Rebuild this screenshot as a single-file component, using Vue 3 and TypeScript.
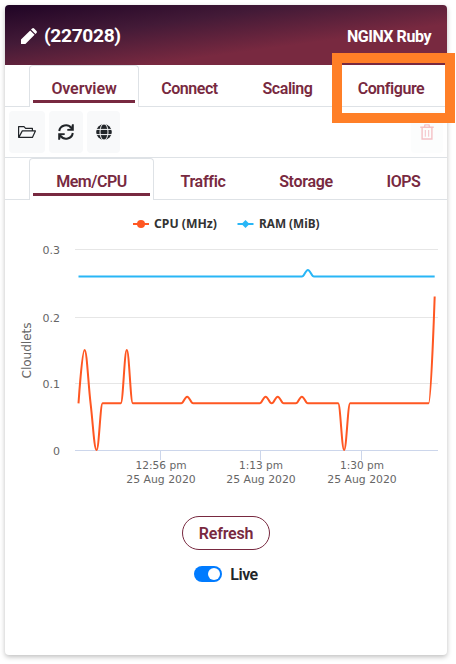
<script setup lang="ts">
import { ref } from 'vue'

type Point = { x: number; y: number }

const mainTabs = ['Overview', 'Connect', 'Scaling', 'Configure']
const statTabs = ['Mem/CPU', 'Traffic', 'Storage', 'IOPS']
const mainTab = ref('Overview')
const statTab = ref('Mem/CPU')
const live = ref(true)

const COUNT = 60
const cpuValues: Record<number, number> = { 1: 0.15, 3: 0, 8: 0.15, 18: 0.08, 31: 0.08, 33: 0.08, 37: 0.08, 44: 0, 59: 0.23 }
const cpu = Array.from({ length: COUNT }, (_, i) => cpuValues[i] ?? 0.07)
const ram = Array.from({ length: COUNT }, (_, i) => (i === 38 ? 0.27 : 0.26))

const gridLines = [
  { label: '0.3', y: 49.5 },
  { label: '0.2', y: 117.5 },
  { label: '0.1', y: 183.5 },
  { label: '0', y: 250.5 },
]
const ticks = [
  { time: '12:56 pm', x: 155.5, w: 51 },
  { time: '1:13 pm', x: 255.5, w: 44 },
  { time: '1:30 pm', x: 356.5, w: 44 },
]

const toPoints = (values: number[]): Point[] =>
  values.map((v, i) => ({ x: 73.5 + i * 6.037, y: 250 - v * 667 }))

// Smooth spline whose control points never overshoot the neighbouring values.
function spline(values: number[]): string {
  const pts = toPoints(values)
  let d = `M${pts[0].x} ${pts[0].y}`
  let out: Point = pts[0]
  for (let i = 1; i < pts.length; i++) {
    const prev = pts[i - 1]
    const p = pts[i]
    const next = pts[i + 1]
    let left: Point = p
    let right: Point = p
    if (next) {
      left = { x: (1.5 * p.x + prev.x) / 2.5, y: (1.5 * p.y + prev.y) / 2.5 }
      right = { x: (1.5 * p.x + next.x) / 2.5, y: (1.5 * p.y + next.y) / 2.5 }
      const fix = ((right.y - left.y) * (right.x - p.x)) / (right.x - left.x) + p.y - right.y
      left.y += fix
      right.y += fix
      if (left.y > prev.y && left.y > p.y) {
        left.y = Math.max(prev.y, p.y)
        right.y = 2 * p.y - left.y
      } else if (left.y < prev.y && left.y < p.y) {
        left.y = Math.min(prev.y, p.y)
        right.y = 2 * p.y - left.y
      }
      if (right.y > next.y && right.y > p.y) {
        right.y = Math.max(next.y, p.y)
        left.y = 2 * p.y - right.y
      } else if (right.y < next.y && right.y < p.y) {
        right.y = Math.min(next.y, p.y)
        left.y = 2 * p.y - right.y
      }
    }
    d += `C${out.x} ${out.y} ${left.x} ${left.y} ${p.x} ${p.y}`
    out = right
  }
  return d
}
const cpuPath = spline(cpu)
const ramPath = spline(ram)
</script>

<template>
  <main class="page">
    <section class="card">
      <header class="head">
        <svg class="pencil" viewBox="0 0 16 16" width="16" height="16">
          <path d="M0 16V11.6L9.2 2.4 13.6 6.8 4.4 16ZM10 1.6 11.1.5Q12.1-.3 13.1.5L15.5 2.9Q16.3 3.9 15.5 4.9L14.4 6Z" />
        </svg>
        <h1 class="ident">(227028)</h1>
        <span class="stack">NGINX Ruby</span>
      </header>

      <nav class="tabs tabs-main">
        <button v-for="t in mainTabs" :key="t" class="tab" :class="[t.toLowerCase(), { active: mainTab === t }]" @click="mainTab = t">
          <span>{{ t }}</span>
        </button>
      </nav>

      <div class="tools">
        <button class="tool folder" aria-label="Files">
          <svg viewBox="0 0 20 14" width="20" height="14" fill="none" stroke="#212529" stroke-width="1.2" stroke-linejoin="round">
            <path d="M1.6 12.4V1.6H7L8.6 3.3H15.4V5.8M1.8 12.4 5.3 5.9H18.4L15.4 12.4Z" />
          </svg>
        </button>
        <button class="tool sync" aria-label="Restart">
          <svg viewBox="0 0 16 16" width="16" height="16" fill="none" stroke="#212529" stroke-width="2">
            <path d="M1.2 7A6.8 6.8 0 0 1 13.4 4.1M14.8 9A6.8 6.8 0 0 1 2.6 11.9" />
            <path d="M15.8.2V6.7H9.3V5L12.8 4.8 14 .2ZM.2 15.8V9.3H6.7V11L3.2 11.2 2 15.8Z" fill="#212529" stroke="none" />
          </svg>
        </button>
        <button class="tool globe" aria-label="Open in browser">
          <svg viewBox="0 0 16 16" width="16" height="16">
            <circle cx="8" cy="8" r="7.8" fill="#212529" />
            <g fill="none" stroke="#f8f9fa" stroke-width="1">
              <ellipse cx="8" cy="8" rx="4" ry="8.2" />
              <path d="M0 5.4H16M0 10.6H16" />
            </g>
          </svg>
        </button>
        <button class="tool trash" aria-label="Delete">
          <svg viewBox="0 0 14 16" width="14" height="16" fill="none" stroke="#dc3545" stroke-width="1.4">
            <path d="M.3 3.3H13.7M4.4 3.1 5 .9H9L9.6 3.1M2.1 3.5V15H11.9V3.5" />
            <path d="M5.3 6V12.7M8.7 6V12.7" stroke-width="1" />
          </svg>
        </button>
      </div>

      <nav class="tabs tabs-stats">
        <button v-for="t in statTabs" :key="t" class="tab" :class="[t.toLowerCase().replace('/', '-'), { active: statTab === t }]" @click="statTab = t">
          <span>{{ t }}</span>
        </button>
      </nav>

      <svg class="chart" viewBox="0 0 442 300" width="442" height="300">
        <g class="legend">
          <path d="M128 24H144" stroke="#ff5722" stroke-width="2" />
          <circle cx="136" cy="24" r="4" fill="#ff5722" />
          <text x="149" y="28" textLength="63" lengthAdjust="spacingAndGlyphs">CPU (MHz)</text>
          <path d="M232.500 24H248.500" stroke="#29b6f6" stroke-width="2" />
          <path d="M240.500 20L244.500 24 240.500 28 236.500 24Z" fill="#29b6f6" />
          <text x="254" y="28" textLength="60.500" lengthAdjust="spacingAndGlyphs">RAM (MiB)</text>
        </g>
        <g v-for="g in gridLines" :key="g.label">
          <path :d="`M70 ${g.y}H433`" :stroke="g.label === '0' ? '#ccd6eb' : '#e6e6e6'" />
          <text class="axis" :x="g.label === '0' ? 48 : 37.500" :y="g.y + 4">{{ g.label }}</text>
        </g>
        <text class="title" transform="translate(26 178.500) rotate(-90)" textLength="56" lengthAdjust="spacingAndGlyphs">Cloudlets</text>
        <g v-for="t in ticks" :key="t.time">
          <path :d="`M${t.x} 251V260`" stroke="#ccd6eb" />
          <text class="axis mid" :x="t.x + 0.500" y="269" :textLength="t.w" lengthAdjust="spacingAndGlyphs">{{ t.time }}</text>
          <text class="axis mid" :x="t.x + 0.500" y="283" textLength="69.500" lengthAdjust="spacingAndGlyphs">25 Aug 2020</text>
        </g>
        <path class="line" :d="cpuPath" stroke="#ff5722" />
        <path class="line" :d="ramPath" stroke="#29b6f6" />
      </svg>

      <div class="actions">
        <button class="refresh">Refresh</button>
        <label class="live">
          <span class="switch" :class="{ on: live }" @click="live = !live"><i /></span>
          <span>Live</span>
        </label>
      </div>
    </section>
    <div class="marker" />
  </main>
</template>

<style>
body { margin: 0; background: #fff; }
</style>

<style scoped>
.page {
  position: relative;
  box-sizing: border-box;
  width: 456px;
  height: 664px;
  padding: 5px 9px 9px 5px;
  overflow: hidden;
  font-family: Roboto, "Open Sans", sans-serif;
  font-size: 16px;
}
button {
  margin: 0;
  padding: 0;
  border: 0;
  background: none;
  font: inherit;
}
svg { display: block; }
.card {
  display: flex;
  flex-direction: column;
  width: 442px;
  height: 650px;
  border-radius: 4px;
  background: #fff;
  box-shadow: 0 2px 5px rgba(0, 0, 0, 0.25);
}
.head {
  display: flex;
  align-items: center;
  box-sizing: border-box;
  height: 60px;
  padding: 2px 16px 0;
  border-radius: 4px 4px 0 0;
  background: linear-gradient(to bottom right, #1f0425 0%, #431a37 33%, #782940 66%, #782940 100%);
  color: #fff;
  font-weight: 700;
}
.ident {
  margin: 0 0 0 7px;
  font-size: 19.2px;
  letter-spacing: -0.35px;
  line-height: 24px;
}
.pencil { fill: #fff; }
.stack { margin-left: auto; letter-spacing: -0.45px; }
.tabs {
  display: grid;
  box-sizing: border-box;
  height: 42px;
  padding-left: 24px;
  border-bottom: 1px solid #dee2e6;
}
.tabs-main { grid-template-columns: 110px 101px 95px 1fr; }
.tabs-stats { grid-template-columns: 125px 98px 108px 1fr; }
.tab {
  display: flex;
  justify-content: center;
  box-sizing: border-box;
  height: 42px;
  padding: 14px 4px 0;
  color: #782940;
  font-weight: 600;
  letter-spacing: -0.45px;
  line-height: 20px;
}
.tab.overview { letter-spacing: -0.1px; }
.tab.traffic, .tab.storage { letter-spacing: -0.3px; }
.tab span { display: block; height: 21px; text-align: center; }
.tab.active {
  padding: 13px 3px 0;
  border: 1px solid #dee2e6;
  border-bottom: 0;
  border-radius: 4px 4px 0 0;
  background: #fff;
}
.tab.active span { width: 100%; border-bottom: 3px solid #782940; }
.tools {
  display: flex;
  gap: 4px;
  box-sizing: border-box;
  height: 51px;
  padding: 4px 4px 0;
  border-bottom: 1px solid #dee2e6;
}
.tool {
  display: flex;
  align-items: center;
  justify-content: center;
  height: 42px;
  border-radius: 4px;
  background: #f8f9fa;
}
.folder { width: 36px; }
.sync { width: 34px; }
.globe { width: 33px; }
.trash { width: 32px; margin-left: auto; opacity: 0.3; }
.chart { flex: none; }
.legend {
  fill: #333;
  font: bold 12px "Noto Sans", sans-serif;
}
.axis {
  fill: #666;
  font: 11px "DejaVu Sans", sans-serif;
}
.mid { text-anchor: middle; }
.title {
  fill: #666;
  font: 11.5px "DejaVu Sans", sans-serif;
}
.line {
  fill: none;
  stroke-width: 2;
  stroke-linejoin: round;
}
.actions {
  display: flex;
  flex-direction: column;
  align-items: center;
  padding-top: 16px;
}
.refresh {
  width: 88px;
  height: 34px;
  border: 1px solid #782940;
  border-radius: 17px;
  color: #782940;
  font-weight: 600;
  letter-spacing: -0.2px;
}
.live {
  display: flex;
  align-items: center;
  gap: 8px;
  margin-top: 14px;
  height: 20px;
  color: #212529;
  font-weight: 600;
  letter-spacing: -0.5px;
}
.switch {
  display: flex;
  align-items: center;
  box-sizing: border-box;
  width: 28px;
  height: 16px;
  padding: 0 2px;
  border-radius: 8px;
  background: #adb5bd;
}
.switch.on { justify-content: flex-end; background: #007bff; }
.switch i {
  width: 12px;
  height: 12px;
  border-radius: 50%;
  background: #fff;
}
.marker {
  position: absolute;
  left: 332px;
  top: 53px;
  box-sizing: border-box;
  width: 123px;
  height: 70px;
  border: 10px solid #ff7f27;
  pointer-events: none;
}
</style>
